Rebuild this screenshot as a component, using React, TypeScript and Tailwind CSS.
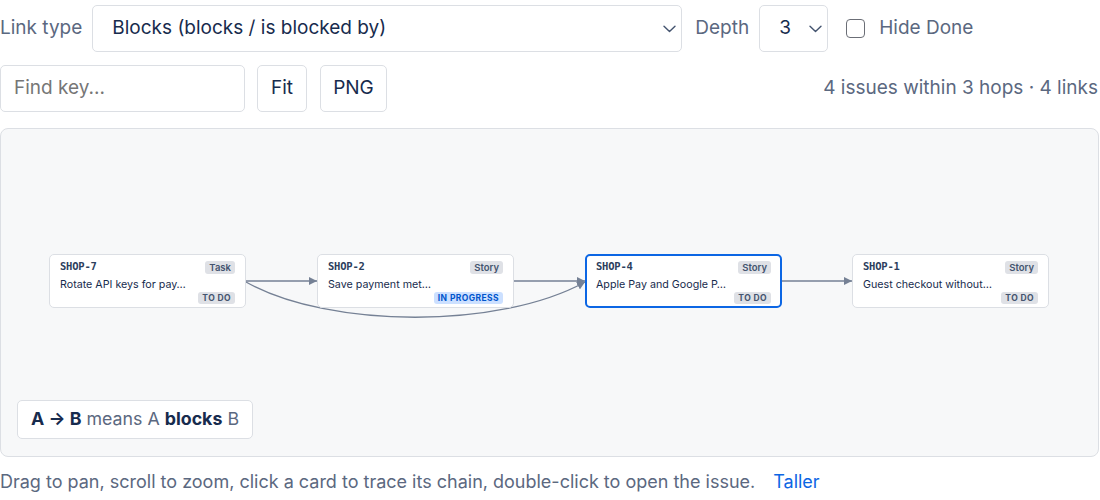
import React from "react";

type Card = {
  key: string;
  type: string;
  title: string;
  status: string;
  left: number;
  selected?: boolean;
  progress?: boolean;
};

const cards: Card[] = [
  { key: "SHOP-7", type: "Task", title: "Rotate API keys for pay…", status: "TO DO", left: 48 },
  { key: "SHOP-2", type: "Story", title: "Save payment met…", status: "IN PROGRESS", left: 316, progress: true },
  { key: "SHOP-4", type: "Story", title: "Apple Pay and Google P…", status: "TO DO", left: 584, selected: true },
  { key: "SHOP-1", type: "Story", title: "Guest checkout without…", status: "TO DO", left: 851 },
];

function Chevron() {
  return (
    <svg width="13" height="8" viewBox="0 0 13 8" fill="none">
      <path d="M1 1.2L6.5 6.6L12 1.2" stroke="#44546f" strokeWidth="1.4" strokeLinecap="round" strokeLinejoin="round" />
    </svg>
  );
}

function IssueCard({ c }: { c: Card }) {
  return (
    <div
      className={
        "absolute top-[125px] w-[197px] h-[54px] rounded-[5px] bg-white flex flex-col " +
        (c.selected ? "border-2 border-[#0c66e4] px-[9px] pt-[4px]" : "border border-[#dcdfe4] px-[10px] pt-[5px]")
      }
      style={{ left: c.left }}
    >
      <div className="flex items-center justify-between h-[14px]">
        <span className="font-['DejaVu_Sans_Mono',monospace] font-bold text-[10.5px] text-[#2c3e5d] tracking-[-0.2px]">{c.key}</span>
        <span className="bg-[#dfe1e6] text-[#44546f] rounded-[3px] px-[4px] h-[13px] leading-[13px] text-[9.5px] font-semibold">{c.type}</span>
      </div>
      <div className="text-[10.7px] leading-[14px] mt-[4px] text-[#172b4d] whitespace-nowrap">{c.title}</div>
      <div className="flex justify-end">
        <span
          className={
            "rounded-[3px] px-[4px] h-[12px] leading-[12px] text-[8.5px] font-bold tracking-[0.4px] " +
            (c.progress ? "bg-[#cce0ff] text-[#0055cc]" : "bg-[#dfe1e6] text-[#44546f]")
          }
        >
          {c.status}
        </span>
      </div>
    </div>
  );
}

export default function App() {
  return (
    <div className="w-[1100px] h-[500px] bg-white font-['Inter',sans-serif] text-[#172b4d] overflow-hidden">
      <div className="flex items-center h-[47px] mt-[5px]">
        <span className="text-[19px] text-[#5b6880] mr-[10px]">Link type</span>
        <div className="w-[590px] h-[47px] border border-[#dcdfe4] rounded-[5px] flex items-center justify-between pl-[19px] pr-[5px]">
          <span className="text-[19px] text-[#172b4d]">Blocks (blocks / is blocked by)</span>
          <Chevron />
        </div>
        <span className="text-[19px] text-[#5b6880] ml-[13px] mr-[10px]">Depth</span>
        <div className="w-[69px] h-[47px] border border-[#dcdfe4] rounded-[5px] flex items-center justify-between pl-[19px] pr-[5px]">
          <span className="text-[19px] text-[#172b4d]">3</span>
          <Chevron />
        </div>
        <div className="ml-[18px] w-[19px] h-[19px] border-[1.5px] border-[#6b6e76] rounded-[4px] bg-white"></div>
        <span className="text-[19px] text-[#5b6880] ml-[14px]">Hide Done</span>
      </div>

      <div className="flex items-center h-[47px] mt-[13px]">
        <div className="w-[245px] h-[47px] border border-[#dcdfe4] rounded-[5px] flex items-center pl-[13px]">
          <span className="text-[19px] text-[#767676]">Find key...</span>
        </div>
        <div className="ml-[12px] w-[50px] h-[47px] border border-[#dcdfe4] rounded-[5px] flex items-center justify-center">
          <span className="text-[19px] text-[#172b4d]">Fit</span>
        </div>
        <div className="ml-[13px] w-[67px] h-[47px] border border-[#dcdfe4] rounded-[5px] flex items-center justify-center">
          <span className="text-[19px] text-[#172b4d]">PNG</span>
        </div>
        <span className="ml-auto mr-[2px] text-[19px] text-[#5b6880]">4 issues within 3 hops · 4 links</span>
      </div>

      <div className="relative mt-[16px] w-[1099px] h-[329px] bg-[#f7f8f9] border border-[#dcdfe4] rounded-[8px]">
        <svg className="absolute left-0 top-0" width="1097" height="327" viewBox="0 0 1097 327" fill="none">
          <defs>
            <marker id="arr" viewBox="0 0 10 10" refX="10" refY="5" markerWidth="8" markerHeight="8" markerUnits="userSpaceOnUse" orient="auto">
              <path d="M0 0L10 5L0 10Z" fill="#758195" />
            </marker>
          </defs>
          <path d="M245 152L316 152" stroke="#758195" strokeWidth="1.3" markerEnd="url(#arr)" />
          <path d="M513 152L584 152" stroke="#758195" strokeWidth="1.3" markerEnd="url(#arr)" />
          <path d="M780 152L851 152" stroke="#758195" strokeWidth="1.3" markerEnd="url(#arr)" />
          <path d="M245 153C329 200 499 200 584 153" stroke="#758195" strokeWidth="1.3" markerEnd="url(#arr)" />
        </svg>
        {cards.map((c) => (
          <IssueCard key={c.key} c={c} />
        ))}
        <div className="absolute left-[16px] top-[271px] h-[39px] px-[13px] bg-white border border-[#dcdfe4] rounded-[5px] flex items-center text-[17.8px] text-[#5b6880]">
          <span className="font-bold text-[#172b4d]">A → B</span>
          <span className="ml-[5px]">means A</span>
          <span className="ml-[5px] font-bold text-[#172b4d]">blocks</span>
          <span className="ml-[5px]">B</span>
        </div>
      </div>

      <div className="flex items-center mt-[11px] text-[18px] text-[#5b6880]">
        <span>Drag to pan, scroll to zoom, click a card to trace its chain, double-click to open the issue.</span>
        <span className="ml-[18px] text-[#0c66e4]">Taller</span>
      </div>
    </div>
  );
}
